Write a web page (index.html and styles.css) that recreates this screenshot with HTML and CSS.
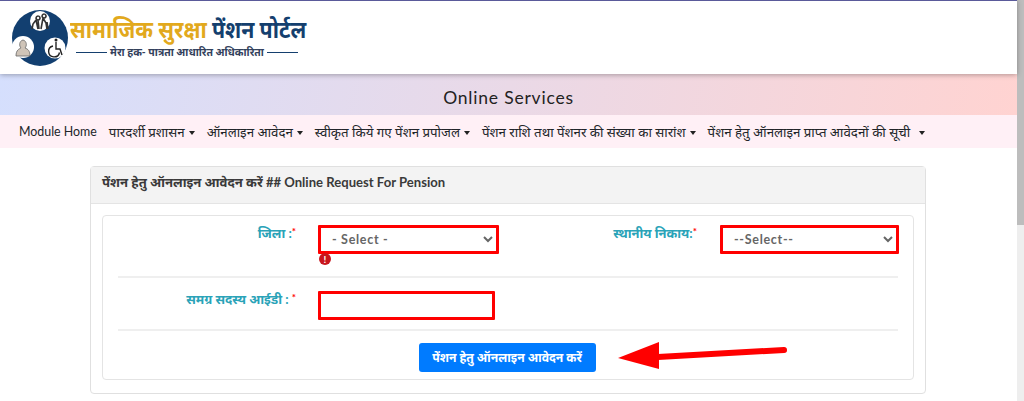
FILE: index.html
```html
<!DOCTYPE html>
<html lang="hi">

<head>
    <meta charset="UTF-8">
    <meta name="viewport" content="width=device-width, initial-scale=1.0">
    <title>Online Services</title>
    <link rel="stylesheet" href="styles.css">
</head>

<body>
    <div id="page">
        <header id="top-header">
            <svg class="logo-mark" width="58" height="58" viewBox="0 0 58 58">
                <circle cx="29" cy="29" r="28" fill="#123f70"/>
                <circle cx="29" cy="12" r="10" fill="#fff"/>
                <circle cx="12" cy="38" r="11" fill="#fff"/>
                <circle cx="44" cy="39" r="10.500" fill="#fff"/>
                <path d="M27 7a2 2 0 1 0 .1 0M25 11l-3 4-1 5M25 11l2 9M27 11l1 9" fill="none" stroke="#333" stroke-width="1.600"/>
                <path d="M33 5a2 2 0 1 0 .1 0M32 9l3 5 1 6M32 9l-2 11M36 13l1 7" fill="none" stroke="#333" stroke-width="1.600"/>
                <path d="M5 47c0-6 3-7 5-8-2-2-2-7 2-8 4 1 4 6 2 8 3 1 5 3 5 8z" fill="#cfc4b8" stroke="#666" stroke-width=".8"/>
                <path d="M45 33v7h4l2 6M42 37a5.500 5.500 0 1 0 6.500 6.500" fill="none" stroke="#222" stroke-width="1.400"/>
                <circle cx="45" cy="31" r="1.500" fill="#222"/>
            </svg>
            <div class="logo-text">
                <div class="logo-title"><span class="logo-yellow">सामाजिक सुरक्षा</span> <span class="logo-navy">पेंशन पोर्टल</span></div>
                <div class="logo-tagline"><span class="tag-line"></span>मेरा हक- पात्रता आधारित अधिकारिता<span class="tag-line"></span></div>
            </div>
        </header>

        <div id="banner">Online Services</div>

        <nav id="main-nav">
            <a class="nav-item home">Module Home</a>
            <a class="nav-item caret">पारदर्शी प्रशासन</a>
            <a class="nav-item caret">ऑनलाइन आवेदन</a>
            <a class="nav-item caret">स्वीकृत किये गए पेंशन प्रपोजल</a>
            <a class="nav-item caret">पेंशन राशि तथा पेंशनर की संख्या का सारांश</a>
            <a class="nav-item caret wide">पेंशन हेतु ऑनलाइन प्राप्त आवेदनों की सूची</a>
        </nav>

        <div class="card">
            <div class="card-header">पेंशन हेतु ऑनलाइन आवेदन करें ## Online Request For Pension</div>
            <div class="card-body">
                <div class="inner-card">
                    <div class="form-row first">
                        <label class="field-label col-a">जिला :<span class="req">*</span></label>
                        <div class="field col-b">
                            <select class="control bad">
                                <option>- Select -</option>
                            </select>
                            <span class="err-icon">!</span>
                        </div>
                        <label class="field-label col-c">स्थानीय निकाय:<span class="req">*</span></label>
                        <div class="field col-d">
                            <select class="control bad">
                                <option>--Select--</option>
                            </select>
                        </div>
                    </div>
                    <div class="form-row second">
                        <label class="field-label col-a">समग्र सदस्य आईडी : <span class="req">*</span></label>
                        <div class="field col-b">
                            <input class="control bad short" type="text">
                        </div>
                    </div>
                    <div class="form-row actions">
                        <button class="submit-btn">पेंशन हेतु ऑनलाइन आवेदन करें</button>
                    </div>
                </div>
            </div>
            <!-- annotation arrow on top of the screenshot -->
            <svg class="arrow" width="172" height="32" viewBox="0 0 172 32">
                <path d="M166 9L40 16" stroke="#f00" stroke-width="6" stroke-linecap="round"/>
                <path d="M0 17L41 1V28z" fill="#f00"/>
            </svg>
        </div>
    </div>

    <div id="scrollbar"><div class="thumb"></div></div>
</body>

</html>
```

FILE: styles.css
```css
html, body {
    margin: 0;
    height: 401px;
    overflow: hidden;
}

body {
    display: flex;
    font-family: "Lato", "Noto Sans", "Noto Sans Devanagari", sans-serif;
    background-color: #fff;
    color: #212529;
}

#page {
    flex: 1;
    min-width: 0;
}

#scrollbar {
    width: 7px;
    background-color: #eeeeee;
}

.thumb {
    height: 225px;
    background-color: #bdbdbd;
}

#top-header {
    height: 74px;
    border-top: 1px solid #5a5a9a;
    box-sizing: border-box;
    display: flex;
    align-items: center;
    padding-left: 11px;
    gap: 1px;
    background-color: #fff;
    box-shadow: 0 1px 5px rgba(0, 0, 0, 0.3);
    position: relative;
}

.logo-text {
    width: 237px;
}

.logo-title {
    font-size: 24px;
    font-weight: 700;
    line-height: 28px;
    white-space: nowrap;
    transform: scaleX(0.89);
    transform-origin: left center;
}

.logo-yellow {
    color: #e2a91d;
}

.logo-navy {
    color: #143f6e;
}

.logo-tagline {
    display: flex;
    align-items: center;
    justify-content: center;
    gap: 3px;
    margin-top: 1px;
    margin-right: 3px;
    font-size: 10.500px;
    font-weight: 700;
    color: #33415c;
    line-height: 16px;
    white-space: nowrap;
}

.tag-line {
    width: 31px;
    height: 1px;
    background-color: #143f6e;
}

#banner {
    height: 41px;
    box-sizing: border-box;
    padding-top: 5px;
    display: flex;
    align-items: center;
    justify-content: center;
    font-size: 17.500px;
    letter-spacing: 0.800px;
    color: #222;
    background: linear-gradient(100deg, #d5dffd, #ffd3d1);
}

#main-nav {
    height: 33px;
    display: flex;
    align-items: center;
    gap: 12px;
    padding-left: 19px;
    background-color: #fff0f6;
    font-size: 13.300px;
    white-space: nowrap;
}

.home {
    font-size: 12.400px;
}

.caret::after {
    content: "";
    display: inline-block;
    margin-left: 4px;
    vertical-align: 2px;
    border-top: 4px solid #222;
    border-left: 3px solid transparent;
    border-right: 3px solid transparent;
}

.wide::after {
    margin-left: 9px;
}

.card {
    position: relative;
    margin: 18px 91px 0 90px;
    border: 1px solid #e0e0e0;
    border-radius: 4px;
}

.card-header {
    height: 30px;
    display: flex;
    align-items: center;
    padding-left: 11px;
    padding-bottom: 6px;
    font-size: 13.100px;
    font-weight: 700;
    color: #3a3a3a;
    background-color: #f3f3f3;
    border-bottom: 1px solid #e4e4e4;
}

.card-body {
    padding: 11px 11px 13px;
}

.inner-card {
    border: 1px solid #e4e4e4;
    border-radius: 4px;
    padding: 0 15px;
    height: 165px;
    box-sizing: border-box;
}

.form-row {
    display: flex;
    border-bottom: 2px solid #efefef;
}

.form-row.first {
    height: 62px;
    padding-top: 9px;
    box-sizing: border-box;
}

.form-row.second {
    height: 53px;
    padding-top: 13px;
    box-sizing: border-box;
}

.form-row.actions {
    border-bottom: none;
    justify-content: center;
    padding: 12px 2px 0 0;
}

.field-label {
    flex: none;
    font-size: 13px;
    font-weight: 700;
    color: #2aa3b8;
    text-align: right;
    line-height: 12px;
    white-space: nowrap;
}

.col-a {
    width: 178px;
}

.col-b {
    margin-left: 22px;
    width: 181px;
}

.col-c {
    width: 198px;
}

.col-d {
    margin-left: 23px;
    width: 179px;
}

.req {
    color: #f00;
    vertical-align: 3px;
    font-size: 10px;
}

.field {
    flex: none;
    display: flex;
    flex-direction: column;
    align-items: flex-start;
}

.control {
    width: 100%;
    height: 29px;
    box-sizing: border-box;
    background-color: #fff;
    border: 3px solid #f00;
    border-radius: 1px;
    padding: 0 7px;
    font-family: inherit;
    font-size: 12.500px;
    font-weight: 700;
    color: #666;
    letter-spacing: 0.700px;
}

.control.short {
    width: 177px;
}

.err-icon {
    width: 12px;
    height: 12px;
    margin: -1px 0 0 1px;
    border-radius: 50%;
    background-color: #c8161d;
    color: #fff;
    font-size: 10px;
    font-weight: 700;
    line-height: 12px;
    text-align: center;
}

.submit-btn {
    width: 177px;
    height: 29px;
    border: none;
    border-radius: 3px;
    background-color: #007bff;
    color: #fff;
    font-family: inherit;
    font-size: 12.200px;
    font-weight: 700;
}

.arrow {
    position: absolute;
    left: 527px;
    top: 174px;
}
```
